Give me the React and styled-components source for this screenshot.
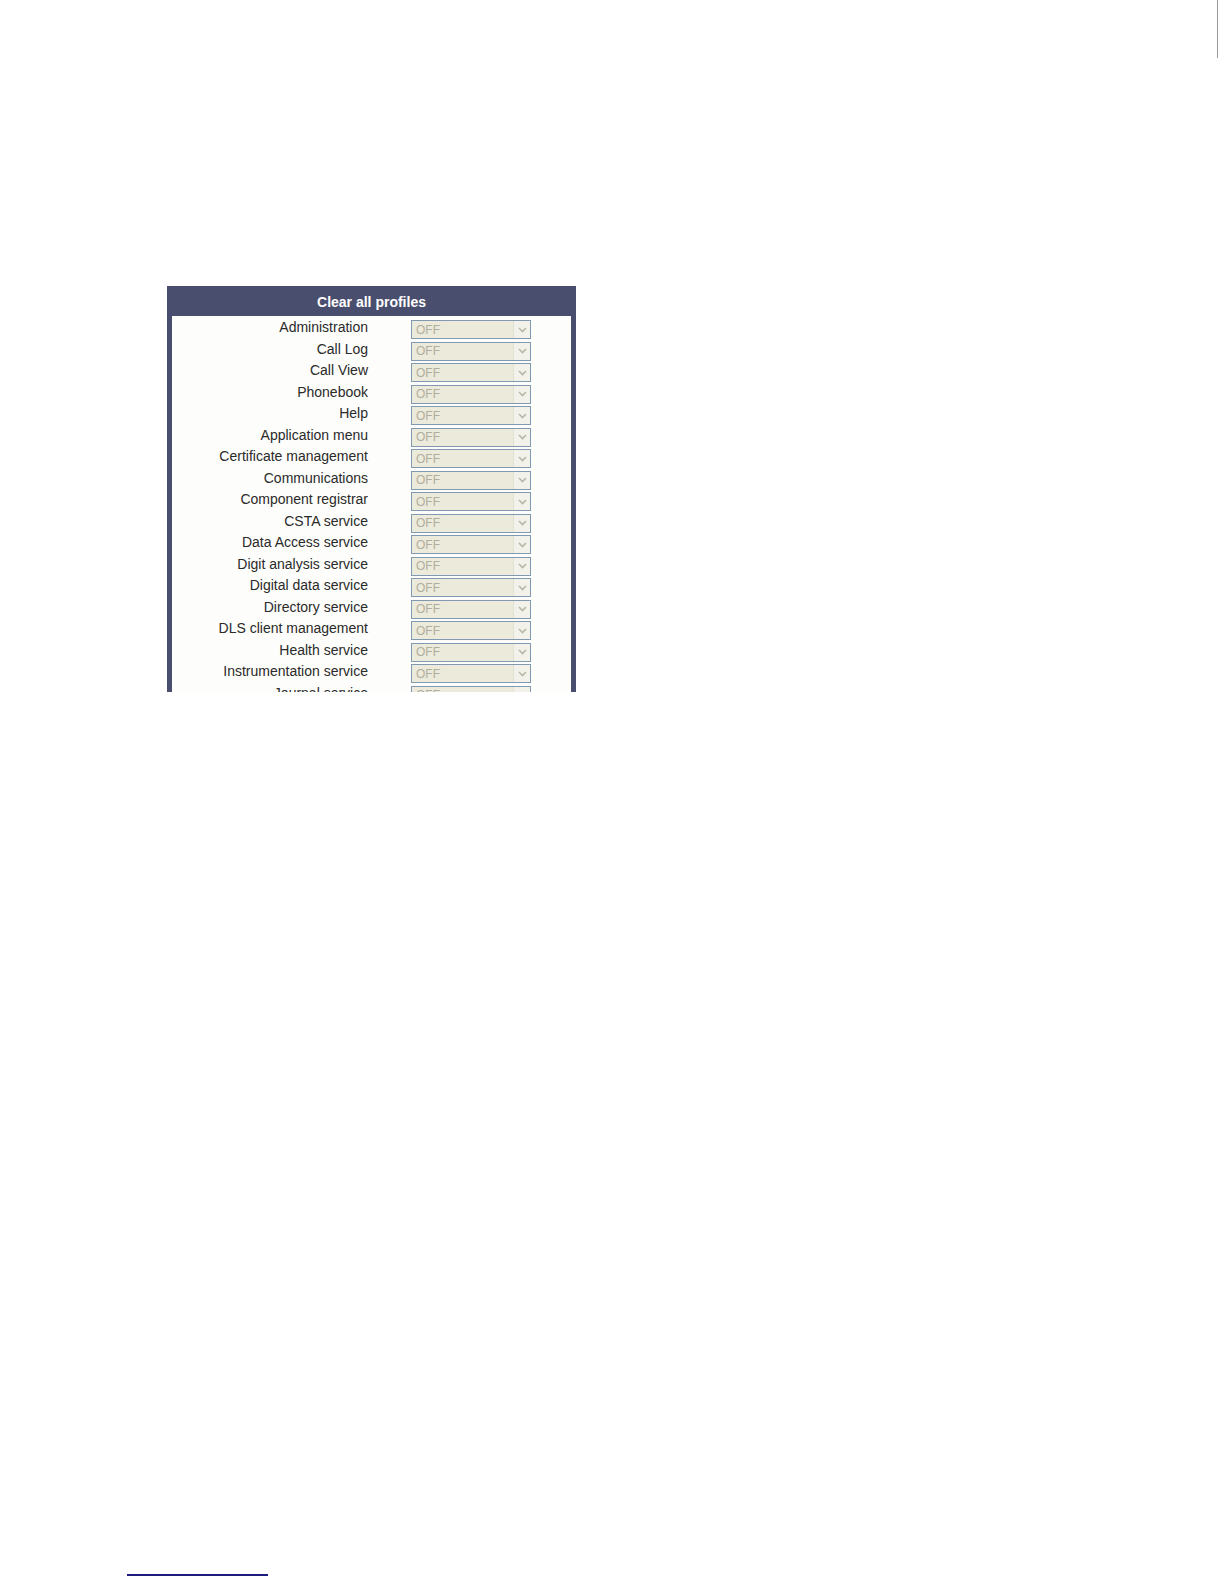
import styled, { createGlobalStyle } from 'styled-components';

const services = [
	'Administration',
	'Call Log',
	'Call View',
	'Phonebook',
	'Help',
	'Application menu',
	'Certificate management',
	'Communications',
	'Component registrar',
	'CSTA service',
	'Data Access service',
	'Digit analysis service',
	'Digital data service',
	'Directory service',
	'DLS client management',
	'Health service',
	'Instrumentation service',
	'Journal service'
];

export default function App() {
	return (
		<>
			<GlobalStyle />
			<Page>
				<TopEdge>
					<EdgeMark />
				</TopEdge>
				<Panel>
					<Title>Clear all profiles</Title>
					<Body>
						{services.map(name => (
							<Row key={name}>
								<Label>{name}</Label>
								<Select>
									<Value>OFF</Value>
									<Arrow>
										<svg width='9' height='6' viewBox='0 0 9 6'>
											<path d='M1 1 L4.5 4.5 L8 1' fill='none' stroke='#b8b6a8' strokeWidth='1.6' />
										</svg>
									</Arrow>
								</Select>
							</Row>
						))}
					</Body>
				</Panel>
				<FootRule />
			</Page>
		</>
	);
}

const GlobalStyle = createGlobalStyle`
	body {
		margin: 0;
		background: #ffffff;
		font-family: 'Liberation Sans', Arial, sans-serif;
	}
`;

const Page = styled.div`
	display: flex;
	flex-direction: column;
	height: 1584px;
	box-sizing: border-box;
	padding-bottom: 8px;
`;

const TopEdge = styled.div`
	display: flex;
	justify-content: flex-end;
	padding-right: 6px;
`;

const EdgeMark = styled.div`
	width: 1px;
	height: 58px;
	background: #9a9a9a;
`;

const Panel = styled.div`
	margin: 228px 0 0 167px;
	width: 409px;
	height: 406px;
	overflow: hidden;
	background: #4a4e6e;
	padding: 0 5px 0 5px;
	box-sizing: border-box;
`;

const Title = styled.div`
	height: 30px;
	display: flex;
	align-items: center;
	justify-content: center;
	color: #ffffff;
	font-weight: bold;
	font-size: 14px;
	padding-top: 2px;
	box-sizing: border-box;
`;

const Body = styled.div`
	background: #fdfdfb;
	padding-top: 2px;
	height: 100%;
`;

const Row = styled.div`
	display: grid;
	grid-template-columns: 196px 120px;
	column-gap: 43px;
	align-items: center;
	height: 21.5px;
`;

const Label = styled.div`
	text-align: right;
	font-size: 14px;
	color: #2a2a2a;
	white-space: nowrap;
	margin-top: -3px;
`;

const Select = styled.div`
	display: flex;
	align-items: stretch;
	height: 19px;
	margin-top: 2px;
	box-sizing: border-box;
	border: 1px solid #8299b2;
	background: #eceadb;
`;

const Value = styled.div`
	flex: 1;
	display: flex;
	align-items: center;
	padding-left: 4px;
	font-size: 12px;
	color: #b0ae9e;
`;

const Arrow = styled.div`
	width: 16px;
	display: flex;
	align-items: center;
	justify-content: center;
	background: #f3f2ea;
	border-left: 1px solid #e2e0d2;
`;

const FootRule = styled.div`
	margin: auto 0 0 127px;
	width: 141px;
	height: 2px;
	background: #1c1c7c;
`;
